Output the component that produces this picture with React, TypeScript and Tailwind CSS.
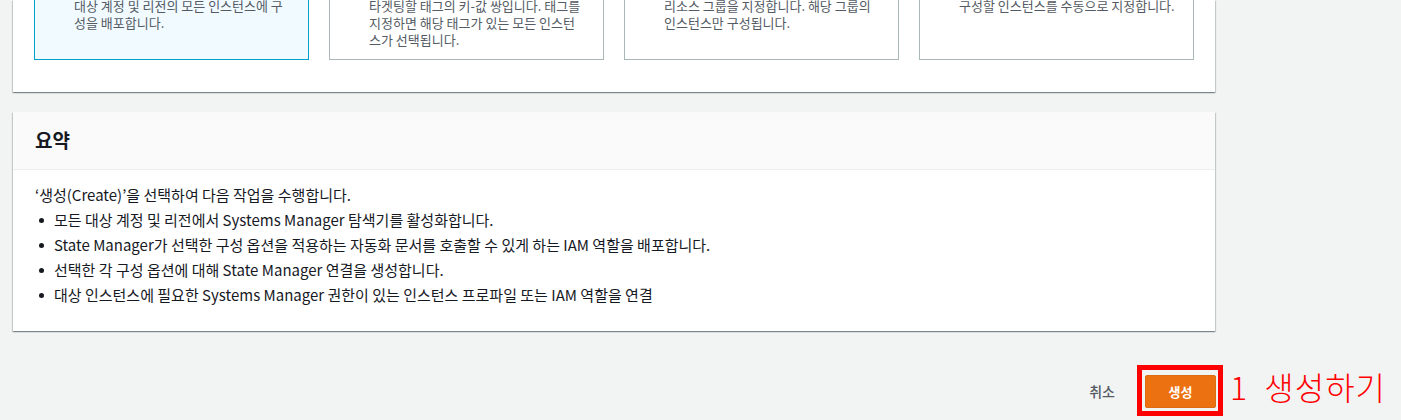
import React from 'react';

const font = { fontFamily: '"Noto Sans CJK KR", "Liberation Sans", sans-serif' };

const tiles = [
  { lines: ['대상 계정 및 리전의 모든 인스턴스에 구', '성을 배포합니다.'], selected: true },
  { lines: ['타겟팅할 태그의 키-값 쌍입니다. 태그를', '지정하면 해당 태그가 있는 모든 인스턴', '스가 선택됩니다.'] },
  { lines: ['리소스 그룹을 지정합니다. 해당 그룹의', '인스턴스만 구성됩니다.'] },
  { lines: ['구성할 인스턴스를 수동으로 지정합니다.'] },
];

const steps = [
  '모든 대상 계정 및 리전에서 Systems Manager 탐색기를 활성화합니다.',
  'State Manager가 선택한 구성 옵션을 적용하는 자동화 문서를 호출할 수 있게 하는 IAM 역할을 배포합니다.',
  '선택한 각 구성 옵션에 대해 State Manager 연결을 생성합니다.',
  '대상 인스턴스에 필요한 Systems Manager 권한이 있는 인스턴스 프로파일 또는 IAM 역할을 연결',
];

const panelShadow =
  'shadow-[0_1px_1px_0_rgba(0,28,36,0.3),1px_1px_1px_0_rgba(0,28,36,0.15),-1px_1px_1px_0_rgba(0,28,36,0.15)]';

export default function App() {
  return (
    <div className="min-h-[420px] w-[1401px] overflow-hidden bg-[#f2f3f3]" style={font}>
      <div className="ml-[13px] w-[1202px]">
        {/* targeting options, top cut off */}
        <div className={`bg-white px-[21px] pb-[32px] ${panelShadow}`}>
          <div className="grid grid-cols-[275px_275px_275px_275px] gap-[20px]">
            {tiles.map((tile, i) => (
              <div
                key={i}
                className={`h-[60px] border border-t-0 pl-[39px] pr-[10px] ${
                  tile.selected ? 'border-[#00a1c9] bg-[#f1faff]' : 'border-[#aab7b8] bg-white'
                }`}
              >
                <div className="-mt-[3px] text-[13px] leading-[17px] text-[#545b64]">
                  {tile.lines.map((line) => (
                    <div key={line} className="whitespace-nowrap">
                      {line}
                    </div>
                  ))}
                </div>
              </div>
            ))}
          </div>
        </div>

        {/* summary */}
        <div className={`mt-[20px] bg-white ${panelShadow}`}>
          <div className="flex h-[58px] items-center border-b border-[#eaeded] bg-[#fafafa] px-[22px]">
            <h2 className="text-[19px] font-bold text-[#16191f]">요약</h2>
          </div>
          <div className="px-[22px] pt-[14px] pb-[25px] text-[15px] leading-[22px] text-[#16191f]">
            <p>‘생성(Create)’을 선택하여 다음 작업을 수행합니다.</p>
            <ul className="flex flex-col">
              {steps.map((step) => (
                <li key={step} className="mt-[3px] flex items-center">
                  <span className="ml-[4px] mr-[10px] h-[5px] w-[5px] shrink-0 rounded-full bg-[#16191f]" />
                  {step}
                </li>
              ))}
            </ul>
          </div>
        </div>

        {/* actions */}
        <div className="mt-[44px] flex items-center justify-end">
          <button className="mr-[30px] text-[14px] font-medium text-[#545b64]">취소</button>
          <div className="relative mr-[-1px]">
            <button className="h-[33px] w-[71px] rounded-[2px] border border-[#dd6b10] bg-[#ec7211] text-[13px] font-bold text-white">
              생성
            </button>
            <div className="pointer-events-none absolute -left-[8px] -right-[7px] -top-[10px] -bottom-[8px] border-[5px] border-[#ff0000]" />
            <span className="absolute left-[85px] top-[-12px] whitespace-nowrap text-[32px] font-light leading-[46px] tracking-[1px] text-[#ff0000]">
              1&nbsp;&nbsp;생성하기
            </span>
          </div>
        </div>
      </div>
    </div>
  );
}
